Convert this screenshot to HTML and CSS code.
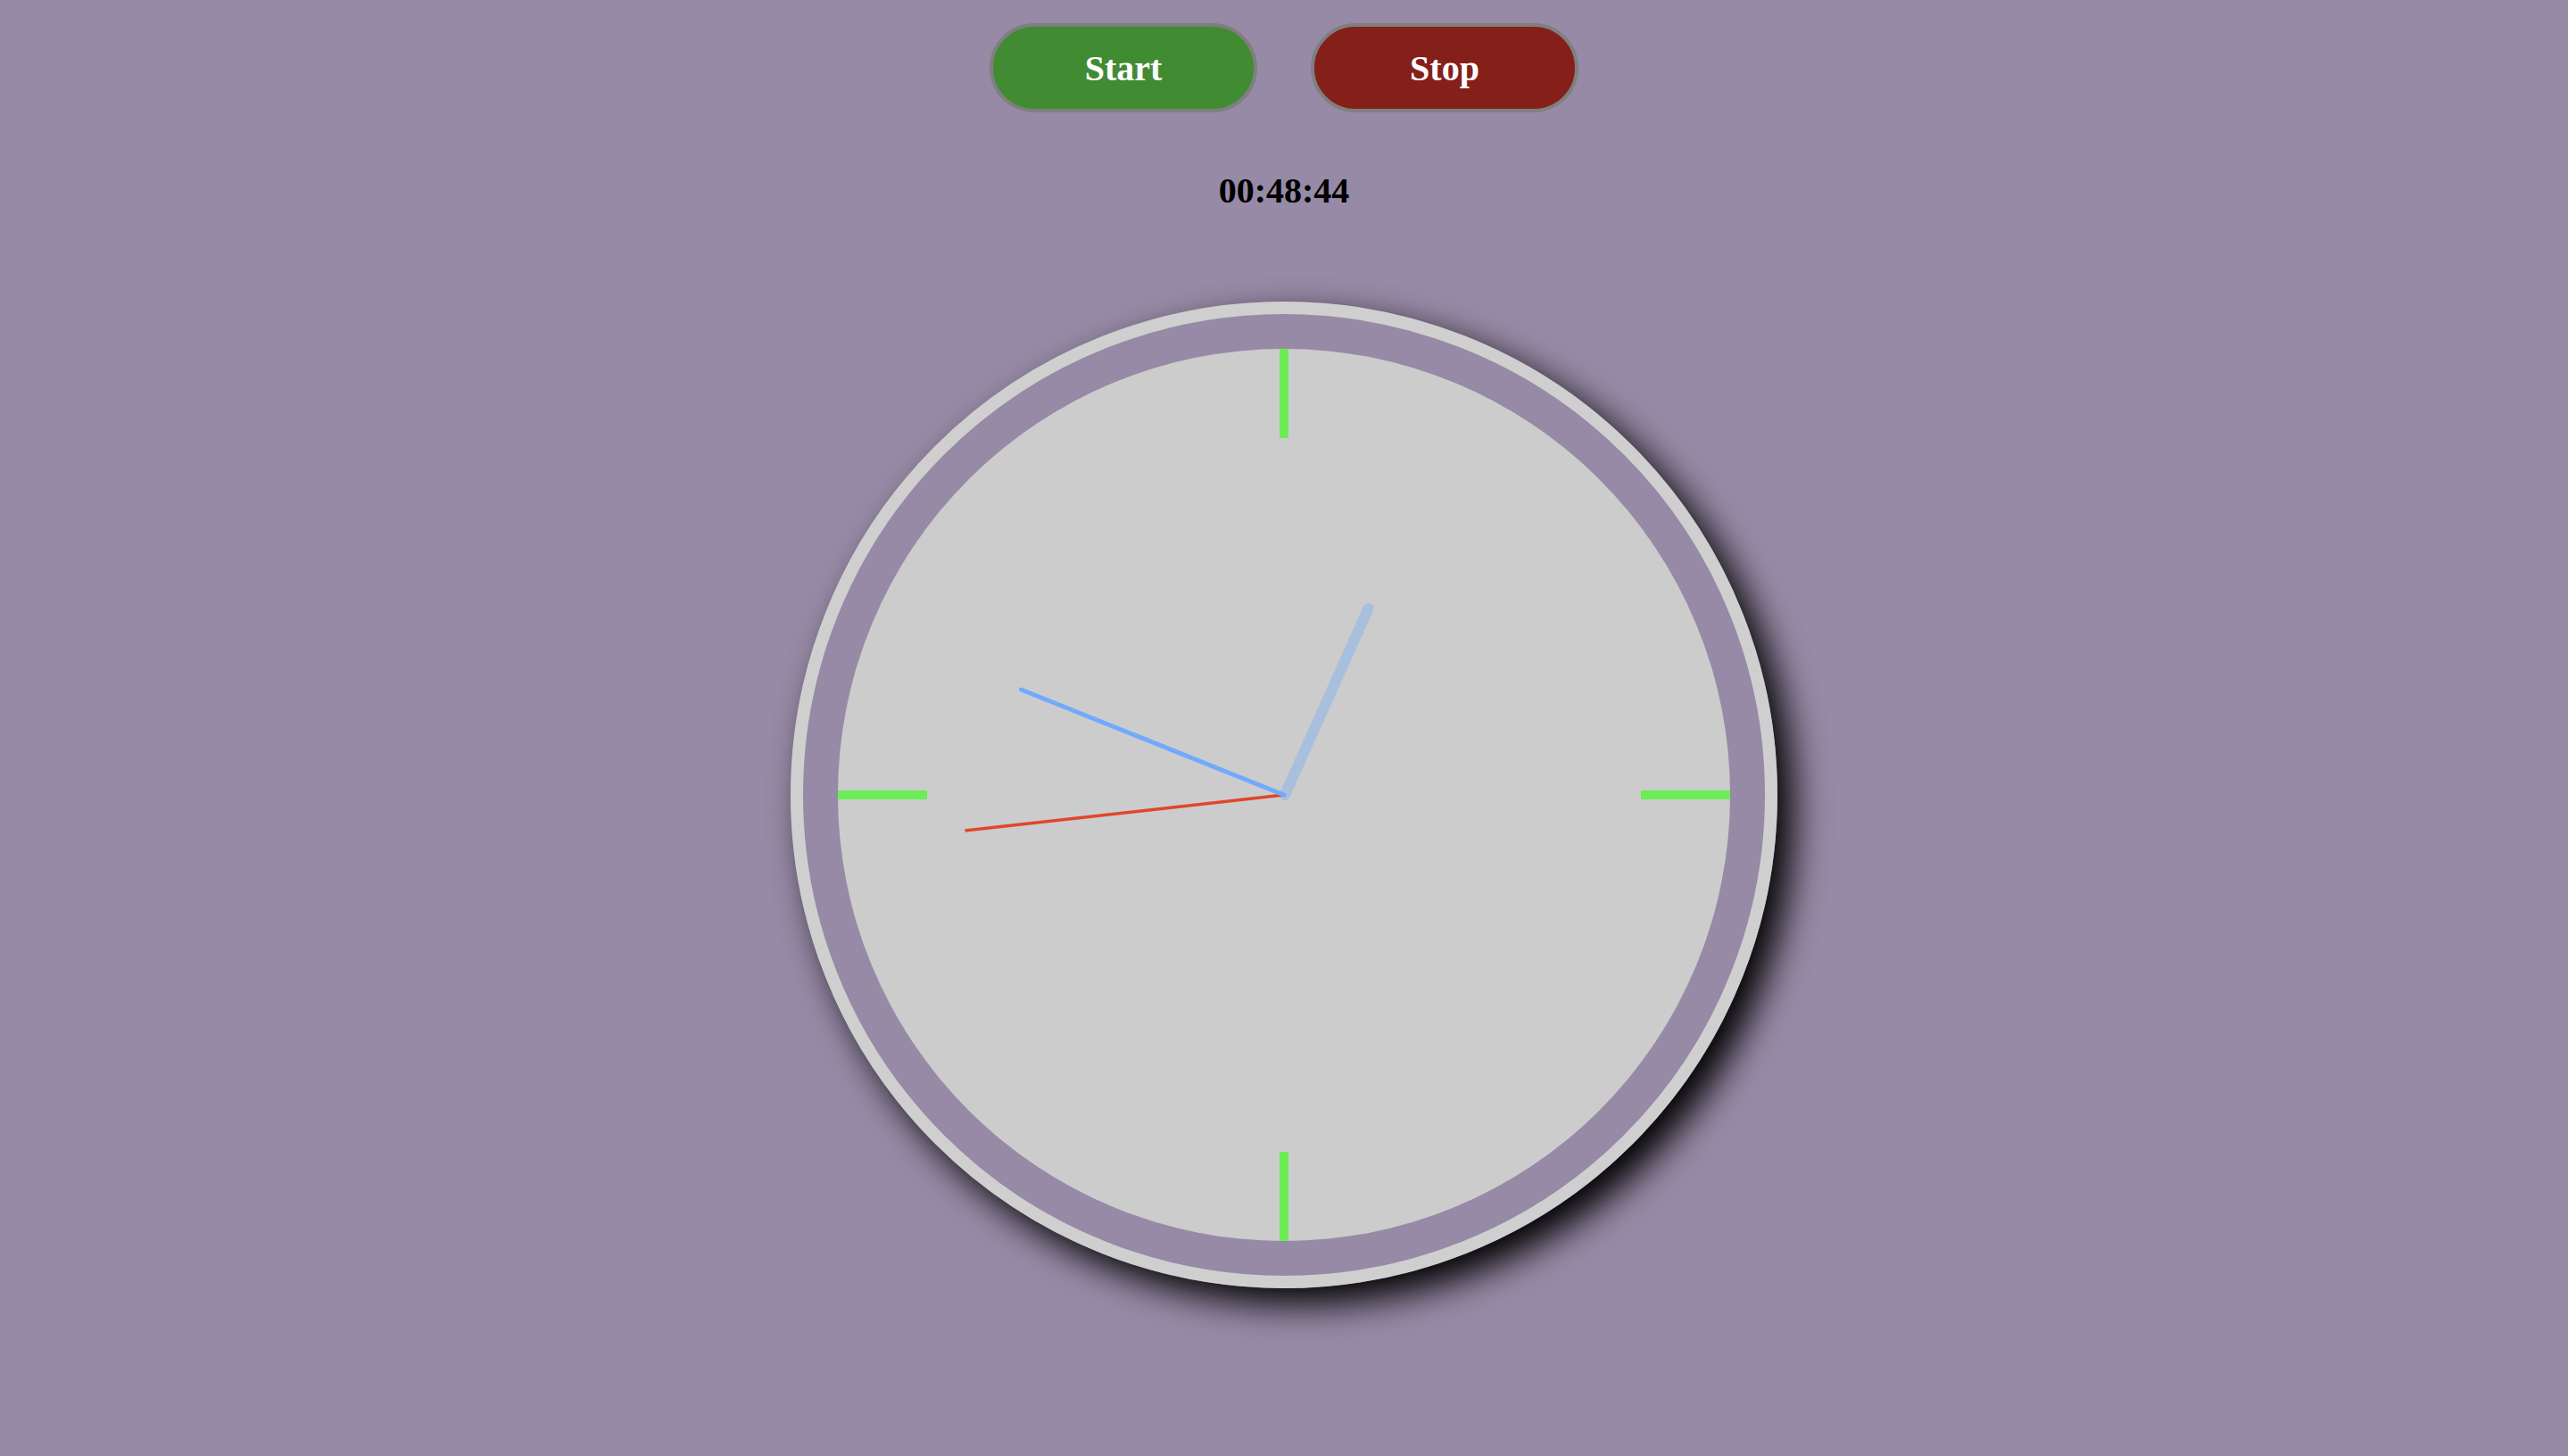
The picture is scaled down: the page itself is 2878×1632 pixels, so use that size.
FILE: index.html
```html
<!DOCTYPE html>
<html>
<head>
<meta charset="utf-8">
<title>Clock</title>
<link rel="stylesheet" href="styles.css">
</head>
<body>
<div class="controls">
  <button class="btn btn-start">Start</button>
  <button class="btn btn-stop">Stop</button>
</div>
<div class="timer">00:48:44</div>
<div class="clock">
  <div class="face">
    <svg class="dial" viewBox="0 0 1000 1000" width="1000" height="1000">
      <rect x="495" y="0" width="10" height="100" fill="#6ded55"/>
      <rect x="495" y="900" width="10" height="100" fill="#6ded55"/>
      <rect x="0" y="495" width="100" height="10" fill="#6ded55"/>
      <rect x="900" y="495" width="100" height="10" fill="#6ded55"/>
      <line x1="501" y1="500" x2="594.5" y2="291" stroke="#a8bfdd" stroke-width="12" stroke-linecap="round"/>
      <line x1="500" y1="500" x2="142.5" y2="540" stroke="#e0462b" stroke-width="3.5"/>
      <line x1="500" y1="500" x2="205.5" y2="382" stroke="#71aafc" stroke-width="5" stroke-linecap="round"/>
    </svg>
  </div>
</div>
</body>
</html>
```

FILE: styles.css
```css
html, body {
  margin: 0;
  padding: 0;
}
body {
  background: #978aa6;
  font-family: "Liberation Serif", "Times New Roman", serif;
  min-height: 1632px;
}
.controls {
  display: flex;
  justify-content: center;
  gap: 60px;
  padding-top: 26px;
}
.btn {
  box-sizing: border-box;
  width: 300px;
  height: 100px;
  border: 4px solid #7f7f7f;
  border-radius: 50px;
  color: #fff;
  font-family: "Liberation Serif", "Times New Roman", serif;
  font-weight: bold;
  font-size: 40px;
  padding: 0;
}
.btn-start {
  background: #418b33;
}
.btn-stop {
  background: #841f1a;
}
.timer {
  margin-top: 65px;
  text-align: center;
  font-weight: bold;
  font-size: 40px;
  line-height: 46px;
  color: #000;
}
.clock {
  box-sizing: border-box;
  width: 1106px;
  height: 1106px;
  margin: 101px auto 0;
  border: 14px solid #cfcfcf;
  border-radius: 50%;
  padding: 39px;
  box-shadow: 18px 18px 40px #000;
}
.face {
  width: 1000px;
  height: 1000px;
  border-radius: 50%;
  background: #cccccc;
  overflow: hidden;
}
.dial {
  display: block;
}
```
